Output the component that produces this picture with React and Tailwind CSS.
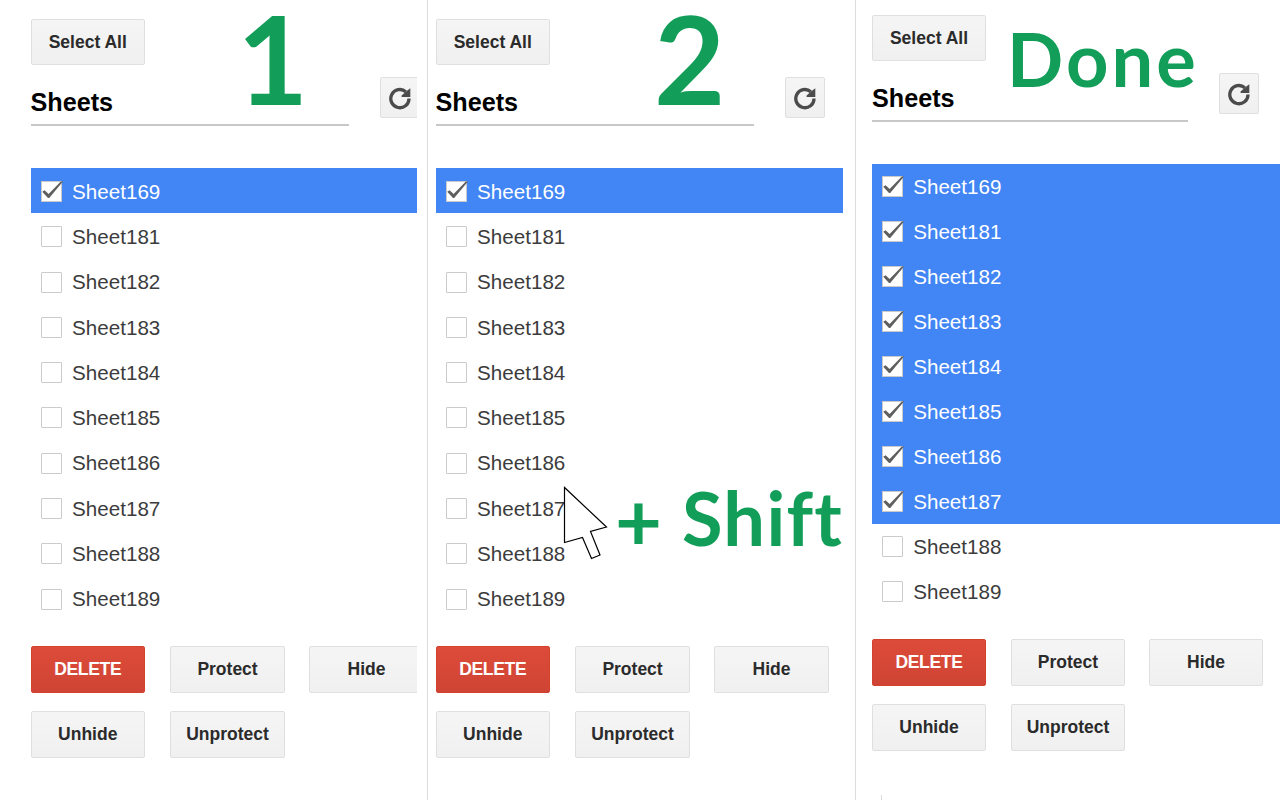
import React from "react";

const SHEETS = [169, 181, 182, 183, 184, 185, 186, 187, 188, 189];

function Button({ children, className = "", danger = false, late = false }) {
  const size = late ? "w-[114px]" : "w-[114.5px]";
  const tone = danger
    ? "border-[#d3412f] bg-linear-to-b from-[#dd4b39] to-[#cf4434] text-white tracking-[-0.3px]"
    : "border-[#dfdfdf] bg-linear-to-b from-[#f5f5f5] to-[#f0f0f0] text-[#2b2b2b]";
  return (
    <button
      className={`${size} ${tone} flex shrink-0 items-center justify-center rounded-[2px] border text-[17.5px] leading-none font-bold whitespace-nowrap ${className}`}
    >
      {children}
    </button>
  );
}

function RefreshIcon() {
  return (
    <svg width="24" height="24" viewBox="0 0 24 24" fill="none">
      <path d="M21 12.6A9.1 9.1 0 1 1 17.8 5.7" stroke="#4b4b4b" strokeWidth="3.3" />
      <path d="M22.3 2.2V10.9H13.6V9.4L19 4.8Z" fill="#4b4b4b" />
    </svg>
  );
}

function Checkbox({ checked }) {
  return (
    <span
      className={`relative block h-[21px] w-[21px] shrink-0 border bg-white ${checked ? "border-[#c9c9c9]" : "rounded-[1px] border-[#cbcbcb]"}`}
    >
      {checked && (
        <svg className="absolute -top-[2px] -left-px" width="24" height="24" viewBox="0 0 24 24">
          <path d="M1.2 11.8 3.6 10.2 7.6 14 19.8 1.6 22 1.6 8.2 18 7 18Z" fill="#5f5f5f" />
        </svg>
      )}
    </span>
  );
}

function Row({ id, checked, late }) {
  return (
    <li
      className={`flex shrink-0 items-center pl-[10px] text-[20.6px] leading-none ${late ? "h-[45px] gap-[10.2px]" : "h-[45.3px] gap-[10.6px] pt-[1.2px]"} ${checked ? "bg-[#4285f4] text-white" : "text-[#3c3c3c]"}`}
    >
      <Checkbox checked={checked} />
      <span className="pt-px">Sheet{id}</span>
    </li>
  );
}

function SheetPanel({ selected, late = false, className }) {
  return (
    <div className={`flex h-full flex-col overflow-hidden ${className}`}>
      <Button late={late} className="h-[46px] pt-[2px]">Select All</Button>
      <div className="mt-[12px] flex shrink-0 items-start">
        <h2
          className={`flex h-[49px] shrink-0 items-center border-b-2 border-[#c8c8c8] pt-[4px] text-[25.2px] leading-none font-bold text-black ${late ? "w-[316px]" : "w-[318px]"}`}
        >
          Sheets
        </h2>
        <button
          className={`flex h-[41px] w-[40px] shrink-0 items-center justify-center rounded-[2px] border border-[#dfdfdf] bg-linear-to-b from-[#f5f5f5] to-[#f0f0f0] ${late ? "ml-[31px]" : "ml-[31.5px]"}`}
        >
          <RefreshIcon />
        </button>
      </div>
      <ul className={`mt-[42.2px] flex shrink-0 flex-col ${late ? "h-[450px]" : "h-[453px]"}`}>
        {SHEETS.map((id, i) => (
          <Row key={id} id={id} checked={i < selected} late={late} />
        ))}
      </ul>
      <div
        className={`mt-[24.8px] grid shrink-0 gap-y-[18px] ${late ? "grid-cols-[139px_138px_114px]" : "grid-cols-[139.8px_139px_114.5px]"}`}
      >
        <Button late={late} danger className="h-[47px]">DELETE</Button>
        <Button late={late} className="h-[47px]">Protect</Button>
        <Button late={late} className="h-[47px]">Hide</Button>
        <Button late={late} className="h-[47px]">Unhide</Button>
        <Button late={late} className="h-[47px]">Unprotect</Button>
      </div>
    </div>
  );
}

function Caption({ children, className }) {
  return (
    <span
      className={`absolute leading-none font-bold whitespace-nowrap text-[#129e59] font-['Lato',sans-serif] ${className}`}
    >
      {children}
    </span>
  );
}

export default function App() {
  return (
    <main className="flex h-[800px] w-[1280px] overflow-hidden bg-white font-['Liberation_Sans',Arial,sans-serif]">
      <section className="relative h-full w-[428px] shrink-0 border-r border-[#dcdcdc] pt-[19px] pl-[30.5px]">
        <SheetPanel selected={1} className="w-[386.5px]" />
        <Caption className="-top-[4px] left-[237px] text-[123px]">1</Caption>
      </section>
      <section className="relative h-full w-[428px] shrink-0 border-r border-[#dcdcdc] pt-[19px] pl-[7.5px]">
        <SheetPanel selected={1} className="w-[407.5px]" />
        <Caption className="-top-[4px] left-[226px] text-[123px]">2</Caption>
        <svg className="absolute top-[484px] left-[134px]" width="48" height="78" viewBox="0 0 48 78">
          <path
            d="M2.5 3.5V58.5L20.5 53.5 29.5 74.5 38 71 28.5 47.5 44.5 43Z"
            fill="#fff"
            stroke="#000"
            strokeWidth="1.2"
          />
        </svg>
        <Caption className="top-[479px] left-[187px] flex items-start gap-[20px] text-[74px]">
          <span className="text-[81px] leading-none">+</span>
          <span className="pt-[2px] tracking-[1.3px]">Shift</span>
        </Caption>
      </section>
      <section className="relative h-full w-[424px] shrink-0 pt-[15px] pl-[16px]">
        <SheetPanel selected={8} late className="w-[408px]" />
        <Caption className="top-[22px] left-[151px] text-[74px] tracking-[3.1px]">Done</Caption>
        <span className="absolute bottom-0 left-[25px] h-[5px] w-px bg-[#dcdcdc]" />
      </section>
    </main>
  );
}
